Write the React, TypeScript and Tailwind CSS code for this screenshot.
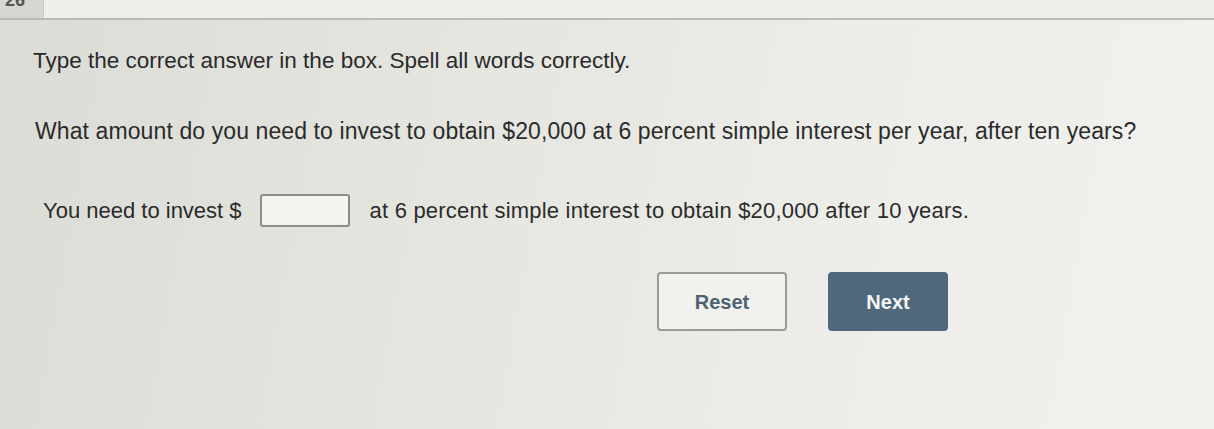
import React from "react";

export default function App() {
  return (
    <div
      className="relative w-[1214px] h-[429px] overflow-hidden bg-[linear-gradient(100deg,#dcdcd6_0%,#e4e5df_35%,#ecece8_65%,#f1f1ee_100%)] text-[#2b2b2b]"
      style={{ fontFamily: '"Liberation Sans", Arial, sans-serif' }}
    >
      <div className="flex h-[20px] border-b-2 border-[#b9bab4]">
        <div className="w-[44px] border-r border-[#c9cac4] bg-[#d6d7d1] text-[18px] font-bold leading-none text-[#555] -mt-[9px] pl-[5px]">
          26
        </div>
        <div className="flex-1 bg-[#eeeeea]" />
      </div>

      <div className="pl-[33px]">
        <p className="mt-[28px] text-[22.5px] leading-[26px] whitespace-nowrap">
          Type the correct answer in the box. Spell all words correctly.
        </p>
        <p className="mt-[44px] pl-[2px] text-[23px] leading-[26px] whitespace-nowrap tracking-[0.1px]">
          What amount do you need to invest to obtain $20,000 at 6 percent simple interest per year, after ten years?
        </p>
        <div className="mt-[50px] pl-[10px] flex items-center text-[22px] leading-[26px] whitespace-nowrap">
          <span>You need to invest $</span>
          <div className="ml-[18px] w-[90px] h-[33px] border-2 border-[#8c8d89] rounded-[3px] bg-[#f3f3ef]" />
          <span className="ml-[20px] tracking-[0.2px]">at 6 percent simple interest to obtain $20,000 after 10 years.</span>
        </div>
      </div>

      <div className="flex mt-[45px] ml-[657px] gap-[41px]">
        <button className="w-[130px] h-[59px] border-2 border-[#9a9b97] rounded-[4px] bg-[#f1f1ed] text-[20px] font-bold text-[#4d6272]">
          Reset
        </button>
        <button className="w-[120px] h-[59px] rounded-[4px] bg-[#4f687c] text-[20px] font-bold text-[#f4f6f7]">
          Next
        </button>
      </div>
    </div>
  );
}
